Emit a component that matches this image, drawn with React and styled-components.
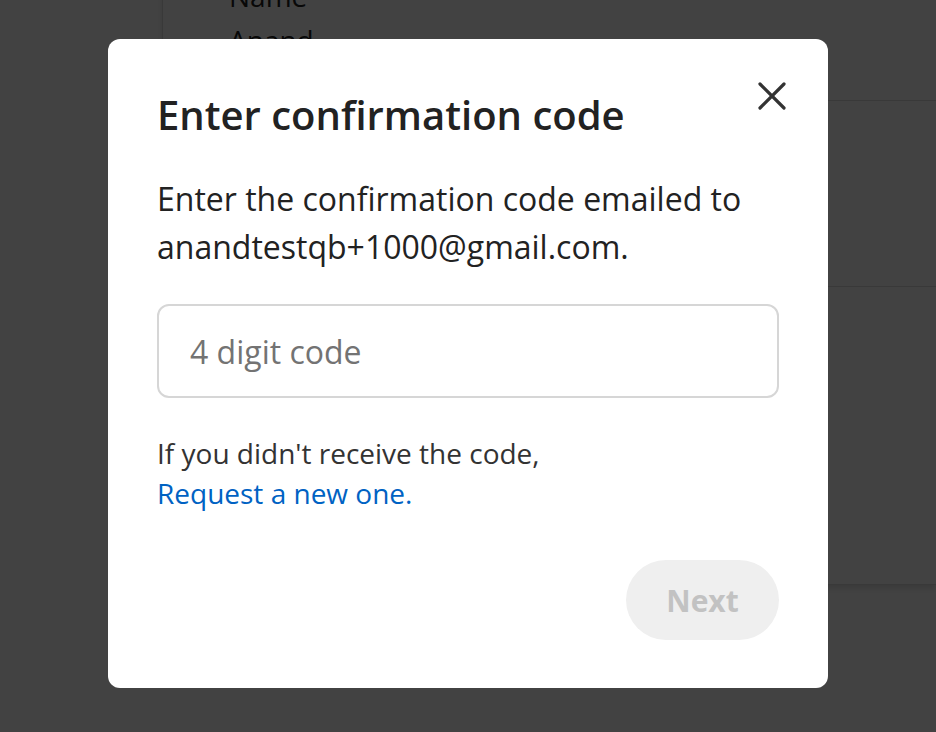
import React from "react";
import styled, { createGlobalStyle } from "styled-components";

const GlobalStyle = createGlobalStyle`
  html, body {
    margin: 0;
    padding: 0;
    background: #ffffff;
    font-family: "Open Sans", "Liberation Sans", sans-serif;
    overflow: hidden;
  }
  * { box-sizing: border-box; }
`;

const Page = styled.div`
  height: 732px;
  padding-left: 162px;
`;

const Card = styled.div`
  margin-top: -30px;
  border-left: 1px solid #dddddd;
  box-shadow: 0 4px 6px rgba(0, 0, 0, 0.12);
`;

const Row = styled.div`
  height: ${(p) => p.height}px;
  border-bottom: 1px solid #dcdcdc;
  padding: 4px 0 0 66px;
  color: #222;
  font-size: 28px;
  line-height: 44px;
`;

const Overlay = styled.div`
  position: fixed;
  inset: 0;
  background: rgba(0, 0, 0, 0.74);
  display: flex;
  justify-content: center;
  align-items: flex-start;
  padding-top: 39px;
`;

const Modal = styled.div`
  width: 720px;
  background: #ffffff;
  border-radius: 12px;
  padding: 52px 49px 48px 49px;
  display: flex;
  flex-direction: column;
`;

const Header = styled.div`
  display: flex;
  justify-content: space-between;
  align-items: flex-start;
`;

const Title = styled.h2`
  margin: 0;
  font-size: 40px;
  font-weight: 600;
  line-height: 48px;
  color: #222222;
`;

const CloseButton = styled.button`
  border: 0;
  background: none;
  padding: 0;
  margin: -11px -9px 0 0;
  width: 32px;
  height: 32px;
  display: flex;
  align-items: center;
  justify-content: center;
  cursor: pointer;
  color: #333333;
`;

const Text = styled.p`
  margin: ${(p) => p.margin || 0};
  font-size: ${(p) => p.size}px;
  line-height: ${(p) => p.lh}px;
  color: ${(p) => p.color || "#222222"};
`;

const Link = styled.a`
  color: #0062c3;
  text-decoration: none;
  cursor: pointer;
`;

const CodeInput = styled.input`
  margin-top: 33px;
  width: 100%;
  height: 94px;
  border: 2px solid #d6d6d6;
  border-radius: 12px;
  padding: 0 31px;
  font-family: inherit;
  font-size: 32px;
  color: #222;
  outline: none;
  &::placeholder {
    color: #737373;
  }
`;

const Footer = styled.div`
  display: flex;
  justify-content: flex-end;
  margin-top: 47px;
`;

const NextButton = styled.button`
  width: 153px;
  height: 80px;
  border: 0;
  border-radius: 40px;
  background: #efefef;
  color: #c2c2c2;
  font-family: inherit;
  font-size: 30px;
  font-weight: 700;
  cursor: default;
`;

export default function App() {
  return (
    <>
      <GlobalStyle />
      <Page>
        <Card>
          <Row height={131}>
            <div>Name</div>
            <div>Anand</div>
          </Row>
          <Row height={186} />
          <Row height={298} />
        </Card>
      </Page>
      <Overlay>
        <Modal>
          <Header>
            <Title>Enter confirmation code</Title>
            <CloseButton aria-label="Close">
              <svg width="28" height="28" viewBox="0 0 28 28" fill="none">
                <path
                  d="M2 2 L26 26 M26 2 L2 26"
                  stroke="currentColor"
                  strokeWidth="3.2"
                  strokeLinecap="round"
                />
              </svg>
            </CloseButton>
          </Header>
          <Text size={32} lh={48} margin="36px 0 0 0">
            Enter the confirmation code emailed to anandtestqb+1000@gmail.com.
          </Text>
          <CodeInput placeholder="4 digit code" />
          <Text size={28} lh={40} color="#333333" margin="35px 0 0 0">
            If you didn't receive the code,
            <br />
            <Link>Request a new one.</Link>
          </Text>
          <Footer>
            <NextButton disabled>Next</NextButton>
          </Footer>
        </Modal>
      </Overlay>
    </>
  );
}
